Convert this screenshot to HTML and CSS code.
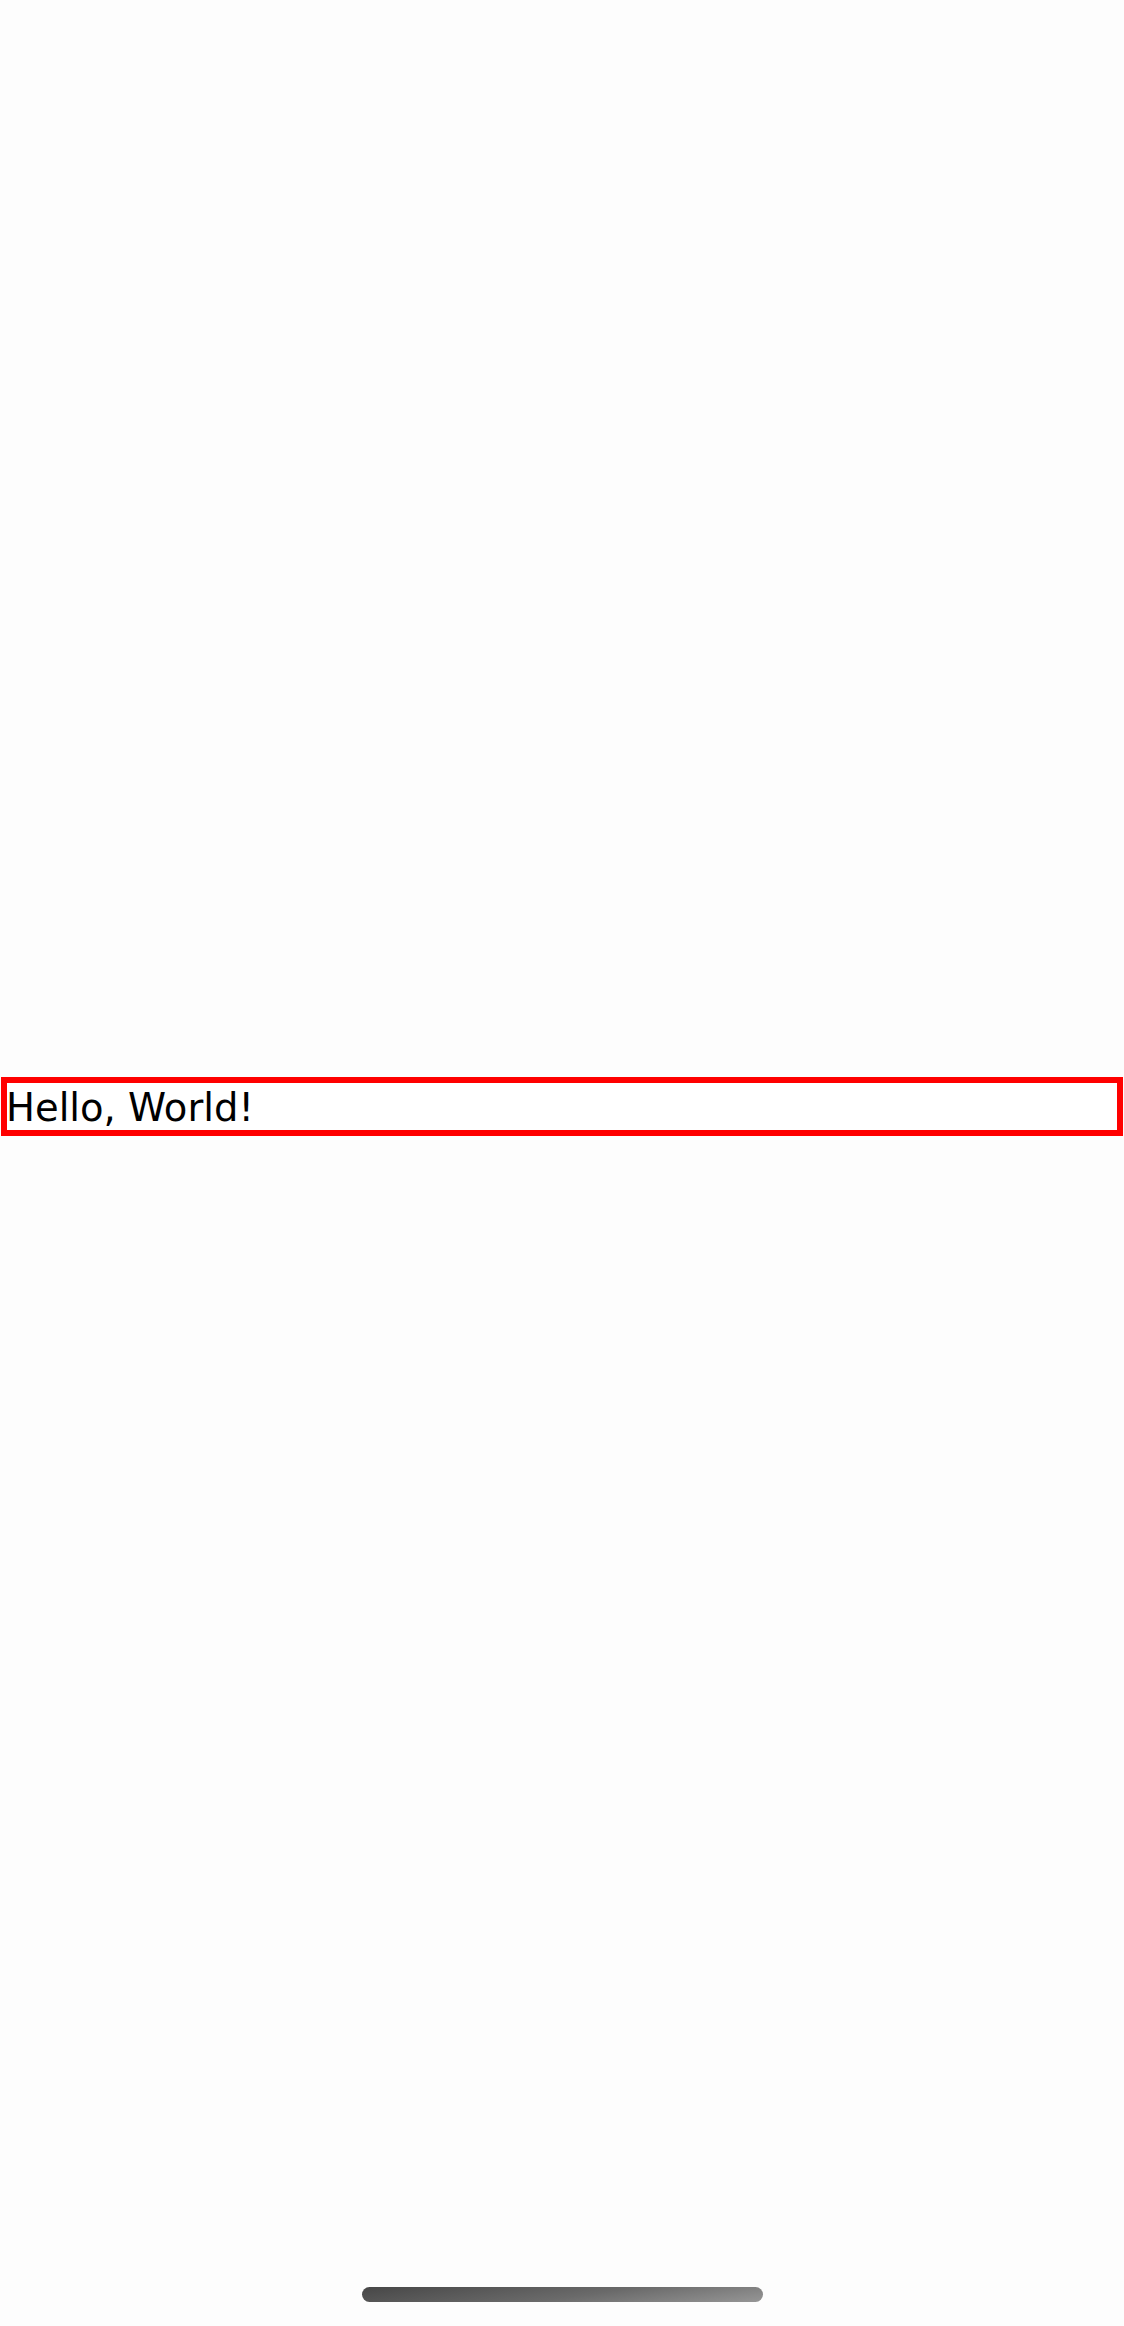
FILE: index.html
```html
<!DOCTYPE html>
<html>
<head>
<meta charset="utf-8">
<link rel="stylesheet" href="styles.css">
</head>
<body>
<div class="screen">
  <div class="hello-box"><span class="hello-text">Hello, World!</span></div>
  <div class="home-bar"><div class="home-indicator"></div></div>
</div>
</body>
</html>
```
FILE: styles.css
```css
html, body {
  margin: 0;
  padding: 0;
  background: #fdfdfd;
}
.screen {
  height: 2326px;
  display: flex;
  flex-direction: column;
  padding: 1077px 1px 0 1px;
  box-sizing: border-box;
}
.hello-box {
  border: 6px solid #ff0000;
  height: 45px;
  padding-top: 2px;
  text-indent: -1px;
  font-family: "DejaVu Sans", sans-serif;
  font-size: 38.5px;
  line-height: 46px;
  color: #000;
  background: #fff;
  overflow: hidden;
  white-space: nowrap;
}
.home-bar {
  margin-top: auto;
  height: 39px;
  display: flex;
  justify-content: center;
}
.home-indicator {
  width: 401px;
  height: 15px;
  border-radius: 8px;
  background: linear-gradient(172deg, #474747 0%, #6a6a6a 55%, #969696 100%);
}
```
